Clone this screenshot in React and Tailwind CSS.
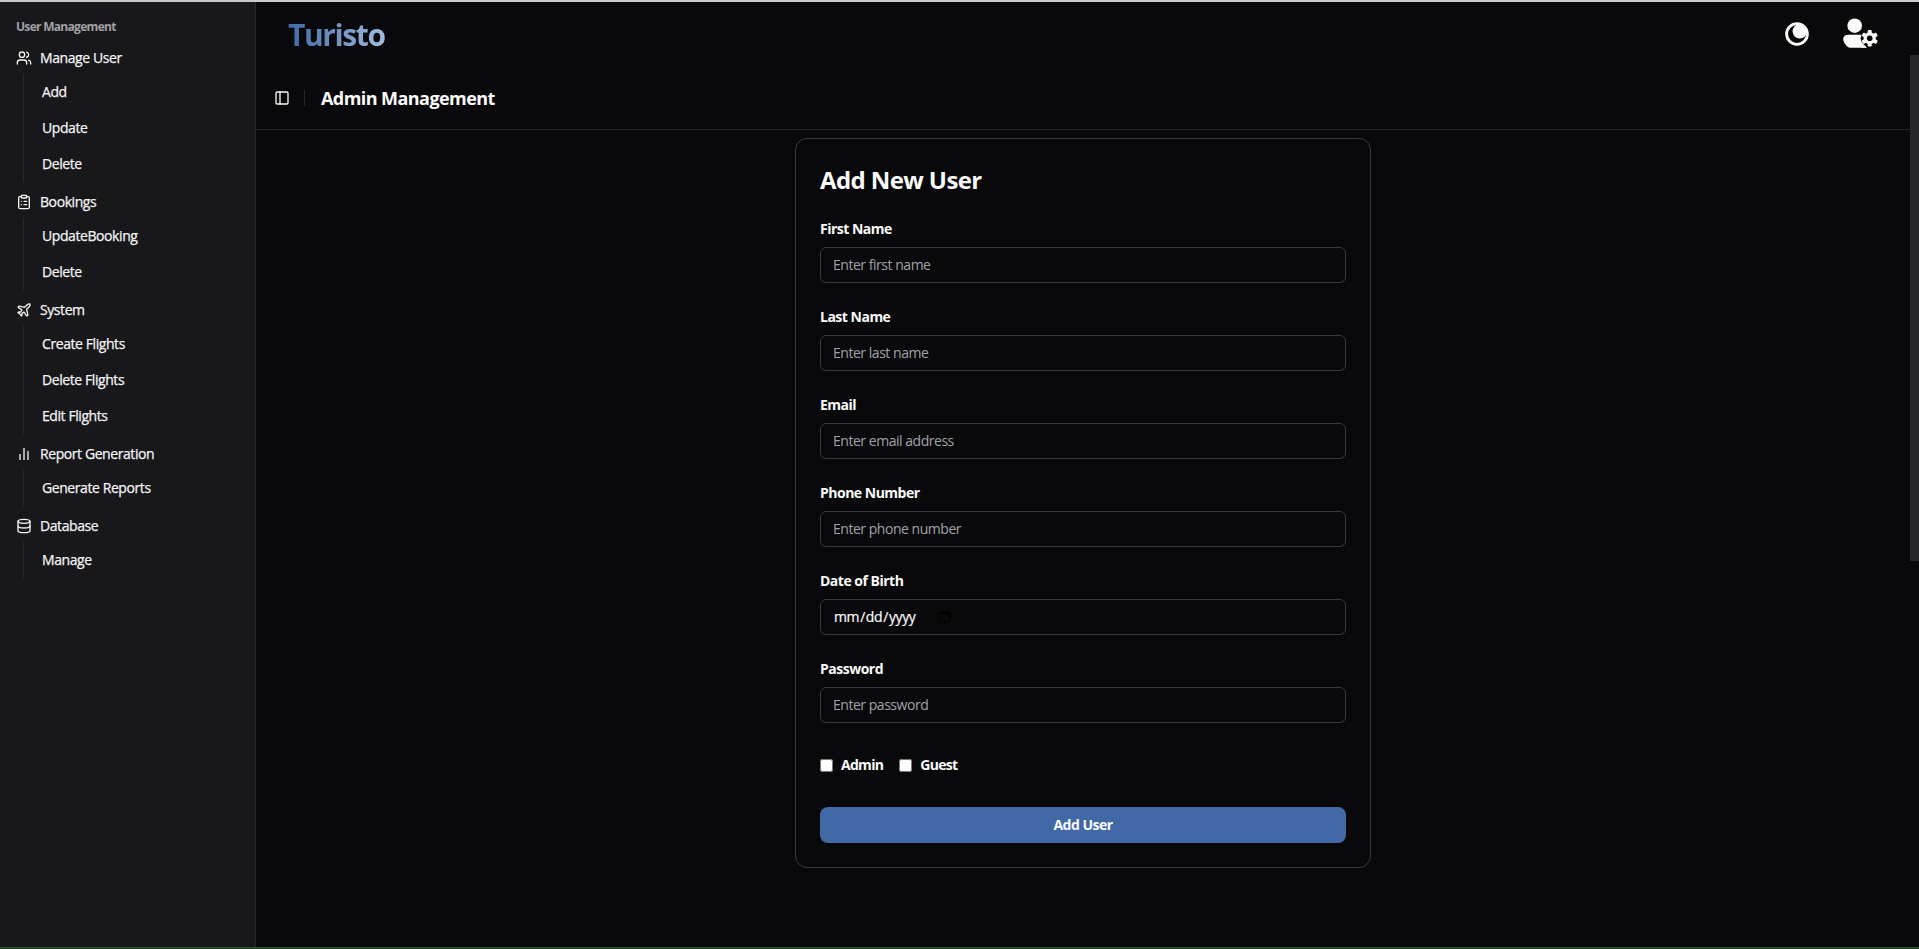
import { Users, ClipboardList, Plane, Database, PanelLeft } from "lucide-react";

const BarsIcon = () => (
  <svg viewBox="0 0 16 16" className="h-4 w-4 shrink-0" fill="#a8a8ab">
    <rect x="3" y="8" width="2" height="6" />
    <rect x="7" y="2" width="2" height="12" />
    <rect x="11" y="5" width="2" height="9" />
  </svg>
);

const MoonIcon = () => (
  <svg viewBox="0 0 24 24" className="h-6 w-6">
    <circle cx="12" cy="12" r="10.4" fill="none" stroke="#fafafa" strokeWidth="2.8" />
    <circle cx="14.8" cy="9.3" r="7.2" fill="#fafafa" />
  </svg>
);

const UserGearIcon = () => (
  <svg viewBox="0 0 36 32" className="h-8 w-9" fill="#fafafa">
    <circle cx="12.7" cy="8.7" r="7.3" />
    <path d="M6 17.7H24V30.7H8C5.6 30.7 1.2 26 1.2 22C1.2 19.5 3 17.7 6 17.7Z" />
    <circle cx="27.7" cy="21.3" r="9" fill="#09090b" />
    <path d="M19 25L25 30.7H19Z" />
    <circle cx="27.7" cy="21.3" r="6.1" />
    <g transform="translate(27.7 21.3)">
      <rect x="-2" y="-8.3" width="4" height="16.6" rx="0.8" />
      <rect x="-2" y="-8.3" width="4" height="16.6" rx="0.8" transform="rotate(60)" />
      <rect x="-2" y="-8.3" width="4" height="16.6" rx="0.8" transform="rotate(120)" />
    </g>
    <circle cx="27.7" cy="21.3" r="2.8" fill="#09090b" />
  </svg>
);

const lucide = "h-4 w-4 shrink-0";

const groups = [
  { label: "Manage User", icon: <Users className={lucide} />, items: ["Add", "Update", "Delete"] },
  { label: "Bookings", icon: <ClipboardList className={lucide} />, items: ["UpdateBooking", "Delete"] },
  { label: "System", icon: <Plane className={lucide} />, items: ["Create Flights", "Delete Flights", "Edit Flights"] },
  { label: "Report Generation", icon: <BarsIcon />, items: ["Generate Reports"] },
  { label: "Database", icon: <Database className={lucide} />, items: ["Manage"] },
];

const fields = [
  { label: "First Name", type: "text", placeholder: "Enter first name" },
  { label: "Last Name", type: "text", placeholder: "Enter last name" },
  { label: "Email", type: "email", placeholder: "Enter email address" },
  { label: "Phone Number", type: "tel", placeholder: "Enter phone number" },
  { label: "Date of Birth", type: "date" },
  { label: "Password", type: "password", placeholder: "Enter password" },
];

const Field = ({ label, type, placeholder }) => (
  <label className="flex flex-col gap-2">
    <span className="text-sm leading-5 font-bold tracking-[-0.5px]">{label}</span>
    <input
      type={type}
      placeholder={placeholder}
      className={
        type === "date"
          ? "flex h-9 w-full rounded-md border border-[#3a3a3d] bg-transparent px-3 py-1 text-sm tracking-[-0.4px] [-webkit-text-stroke:0.2px]"
          : "flex h-9 w-full rounded-md border border-[#3a3a3d] bg-transparent px-3 pt-0.5 pb-1 text-sm tracking-[-0.47px] placeholder:text-[#a1a1aa]"
      }
    />
  </label>
);

const Check = ({ label }) => (
  <label className="flex items-center gap-2 text-sm font-bold tracking-[-0.7px]">
    <input type="checkbox" className="h-[13px] w-[13px]" />
    {label}
  </label>
);

export default function App() {
  return (
    <div className="flex h-[949px] w-full flex-col overflow-hidden border-t-2 border-[#c9cad0] bg-[#09090b] font-['Open_Sans','Noto_Sans',sans-serif] text-[#fafafa]">
      <div className="flex min-h-0 flex-1">
        <aside className="flex w-64 shrink-0 flex-col border-r border-[#27272a] bg-[#18181b] px-4 pt-2 text-sm text-[#f4f4f5]">
          <div className="flex h-8 items-center pt-px text-xs font-bold tracking-[-0.7px] text-[#a1a1a4]">User Management</div>
          <nav className="flex flex-col gap-1 tracking-[-0.42px] [-webkit-text-stroke:0.25px]">
            {groups.map((g) => (
              <div key={g.label}>
                <div className="flex h-8 items-center gap-2">
                  {g.icon}
                  <span>{g.label}</span>
                </div>
                <ul className="ml-[7px] border-l border-[#27272a] pl-[18px]">
                  {g.items.map((t) => (
                    <li key={t} className="flex h-9 items-center">{t}</li>
                  ))}
                </ul>
              </div>
            ))}
          </nav>
        </aside>
        <main className="flex min-w-0 flex-1 flex-col">
          <header className="flex h-[53px] shrink-0 items-start justify-between pr-[41px] pl-8">
            <span className="mt-[13px] bg-gradient-to-r from-[#4169a6] to-[#a3bbdf] bg-clip-text text-[30px] leading-10 font-bold tracking-[-1.4px] text-transparent">Turisto</span>
            <div className="flex items-center gap-[33px] pt-[15px]">
              <div className="pt-0.5">
                <MoonIcon />
              </div>
              <UserGearIcon />
            </div>
          </header>
          <div className="flex min-h-0 flex-1">
            <div className="flex min-w-0 flex-1 flex-col">
              <div className="flex h-[75px] shrink-0 items-center border-b border-[#27272a] pt-3 pl-[18px]">
                <PanelLeft className="h-4 w-4" />
                <div className="ml-[14px] h-4 w-px bg-[#27272a]" />
                <h1 className="ml-4 text-lg font-bold tracking-[-0.56px]">Admin Management</h1>
              </div>
              <form className="mt-2 ml-[539px] flex w-[576px] flex-col gap-6 rounded-xl border border-[#3a3a3d] p-6">
                <h2 className="h-8 pt-px text-2xl font-bold tracking-[-0.6px]">Add New User</h2>
                {fields.map((f) => (
                  <Field key={f.label} {...f} />
                ))}
                <div className="flex h-9 items-center gap-4">
                  <Check label="Admin" />
                  <Check label="Guest" />
                </div>
                <button type="button" className="h-9 rounded-lg bg-[#4169a6] text-sm font-bold tracking-[-0.5px]">Add User</button>
              </form>
            </div>
            <div className="h-[506px] w-[9px] bg-[#27272a]" />
          </div>
        </main>
      </div>
      <div className="h-0.5 shrink-0 border-t border-[#2f5a33] bg-[#123d16]" />
    </div>
  );
}
